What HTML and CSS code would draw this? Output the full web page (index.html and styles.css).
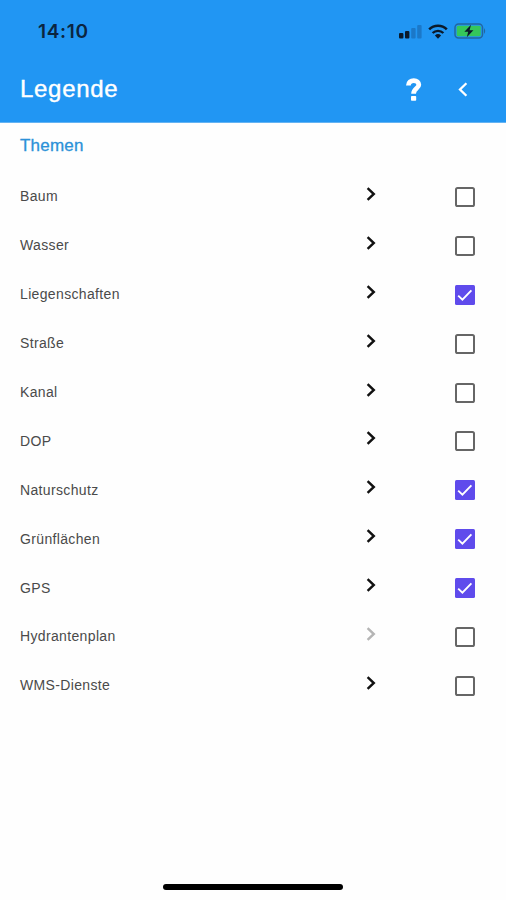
FILE: index.html
```html
<!DOCTYPE html>
<html lang="de">
<head>
    <meta charset="UTF-8">
    <title>Legende</title>
    <link rel="stylesheet" href="styles.css">
</head>
<body>
    <svg class="symbols" width="0" height="0">
        <symbol id="chevron" viewBox="0 0 10 14">
            <path d="M1.6 1.2 L7.8 7 L1.6 12.8" fill="none" stroke="currentColor" stroke-width="2.4"/>
        </symbol>
        <symbol id="box" viewBox="0 0 20 20">
            <rect x="1" y="1" width="18" height="18" rx="1.6" fill="#fff" stroke="#666" stroke-width="2"/>
        </symbol>
        <symbol id="box-checked" viewBox="0 0 20 20">
            <rect width="20" height="20" rx="1.5" fill="#5f4bec"/>
            <path d="M3.2 10.6 L7.4 14.6 L16.4 5.4" fill="none" stroke="#fff" stroke-width="1.9"/>
        </symbol>
    </svg>

    <header>
        <div class="status-bar">
            <span class="time">14:10</span>
            <div class="status-icons">
                <svg width="23" height="15" viewBox="0 0 23 15">
                    <rect x="0" y="9" width="4.4" height="5.5" rx="1" fill="#0b1a2a"/>
                    <rect x="6" y="7" width="4.4" height="7.5" rx="1" fill="#0b1a2a"/>
                    <rect x="12.2" y="4" width="4.4" height="10.5" rx="1" fill="#1b78c8"/>
                    <rect x="18.2" y="1" width="4.4" height="13.5" rx="1" fill="#1b78c8"/>
                </svg>
                <svg width="20" height="15" viewBox="0 0 20 15">
                    <path d="M1.2 5.4 A12.6 12.6 0 0 1 18.8 5.4" fill="none" stroke="#0b1a2a" stroke-width="2.6"/>
                    <path d="M4.6 9 A7.8 7.8 0 0 1 15.4 9" fill="none" stroke="#0b1a2a" stroke-width="2.4"/>
                    <path d="M6.9 11.4 A4.6 4.6 0 0 1 13.1 11.4 L10 14.7 Z" fill="#0b1a2a"/>
                </svg>
                <svg width="33" height="16" viewBox="0 0 33 16">
                    <rect x="1" y="1" width="27.5" height="14" rx="3.5" fill="none" stroke="#23679f" stroke-width="1.5"/>
                    <rect x="2.7" y="2.7" width="24" height="10.6" rx="1.5" fill="#35c75a"/>
                    <path d="M30 5 Q32.4 8 30 11 Z" fill="#23679f"/>
                    <path d="M17 1.8 L10.4 8.8 H14.2 L12.8 14.2 L19.4 7.2 H15.6 Z" fill="#0b1a2a"/>
                </svg>
            </div>
        </div>
        <div class="title-bar">
            <h1>Legende</h1>
            <svg class="help" width="16" height="23" viewBox="0 0 16 23">
                <path d="M2.4 7.6 C2.4 4.2 4.8 2.6 7.8 2.6 C10.8 2.6 12.8 4.2 12.8 6.8 C12.8 10.4 7.6 10.4 7.6 15.8" fill="none" stroke="#fff" stroke-width="4.8"/>
                <rect x="5" y="18" width="5.2" height="4.8" rx="0.8" fill="#fff"/>
            </svg>
            <svg class="back" width="10" height="15" viewBox="0 0 10 15">
                <path d="M8.4 1.2 L2 7.5 L8.4 13.8" fill="none" stroke="#fff" stroke-width="2.3"/>
            </svg>
        </div>
    </header>

    <main>
        <h2>Themen</h2>
        <ul class="themes">
            <li><span class="name">Baum</span><svg class="chevron"><use href="#chevron"/></svg><svg class="check"><use href="#box"/></svg></li>
            <li><span class="name">Wasser</span><svg class="chevron"><use href="#chevron"/></svg><svg class="check"><use href="#box"/></svg></li>
            <li><span class="name">Liegenschaften</span><svg class="chevron"><use href="#chevron"/></svg><svg class="check"><use href="#box-checked"/></svg></li>
            <li><span class="name">Straße</span><svg class="chevron"><use href="#chevron"/></svg><svg class="check"><use href="#box"/></svg></li>
            <li><span class="name">Kanal</span><svg class="chevron"><use href="#chevron"/></svg><svg class="check"><use href="#box"/></svg></li>
            <li><span class="name">DOP</span><svg class="chevron"><use href="#chevron"/></svg><svg class="check"><use href="#box"/></svg></li>
            <li><span class="name">Naturschutz</span><svg class="chevron"><use href="#chevron"/></svg><svg class="check"><use href="#box-checked"/></svg></li>
            <li><span class="name">Grünflächen</span><svg class="chevron"><use href="#chevron"/></svg><svg class="check"><use href="#box-checked"/></svg></li>
            <li><span class="name">GPS</span><svg class="chevron"><use href="#chevron"/></svg><svg class="check"><use href="#box-checked"/></svg></li>
            <li><span class="name">Hydrantenplan</span><svg class="chevron disabled"><use href="#chevron"/></svg><svg class="check"><use href="#box"/></svg></li>
            <li><span class="name">WMS-Dienste</span><svg class="chevron"><use href="#chevron"/></svg><svg class="check"><use href="#box"/></svg></li>
        </ul>
    </main>

    <div class="home-indicator"></div>
</body>
</html>
```
FILE: styles.css
```css
* {
    box-sizing: border-box;
}

body {
    display: flex;
    flex-direction: column;
    height: 900px;
    margin: 0;
    background: #fefefe;
    font-family: "Liberation Sans", Arial, sans-serif;
    overflow: hidden;
}

.symbols {
    display: none;
}

header {
    height: 123px;
    background: #2196f3;
    border-bottom: 1px solid #64b3f3;
}

.status-bar {
    display: flex;
    align-items: center;
    justify-content: space-between;
    height: 62px;
    padding: 0 19px 0 38px;
}

.time {
    font-family: Inter, sans-serif;
    font-size: 19px;
    font-weight: 600;
    letter-spacing: 0.7px;
    color: #0b2540;
}

.status-icons {
    display: flex;
    align-items: center;
    gap: 6px;
}

.title-bar {
    display: flex;
    align-items: center;
    height: 54px;
    padding: 0 38px 0 20px;
}

h1 {
    flex: 1;
    margin: 0;
    font-size: 24px;
    font-weight: 400;
    letter-spacing: 0.7px;
    color: #fff;
    -webkit-text-stroke: 0.4px #fff;
}

.back {
    margin-left: 36px;
}

main {
    flex: 1;
}

h2 {
    height: 49px;
    margin: 0;
    padding-left: 20px;
    font-size: 17px;
    font-weight: 400;
    line-height: 45px;
    letter-spacing: 0.2px;
    color: #2b91d8;
    -webkit-text-stroke: 0.3px #2b91d8;
}

.themes {
    margin: 0;
    padding: 0;
    list-style: none;
}

.themes li {
    display: grid;
    grid-template-columns: 346px 89px 20px;
    align-items: center;
    height: 48.9px;
    padding-left: 20px;
}

.name {
    font-size: 14px;
    letter-spacing: 0.35px;
    color: #4a4a4a;
}

.chevron {
    width: 10px;
    height: 14px;
    margin-bottom: 5px;
    color: #111;
}

.chevron.disabled {
    color: #b5b5b5;
}

.check {
    width: 20px;
    height: 20px;
    margin-top: 1px;
}

.home-indicator {
    width: 180px;
    height: 6px;
    margin: 0 auto 10px;
    border-radius: 3px;
    background: #000;
}
```
